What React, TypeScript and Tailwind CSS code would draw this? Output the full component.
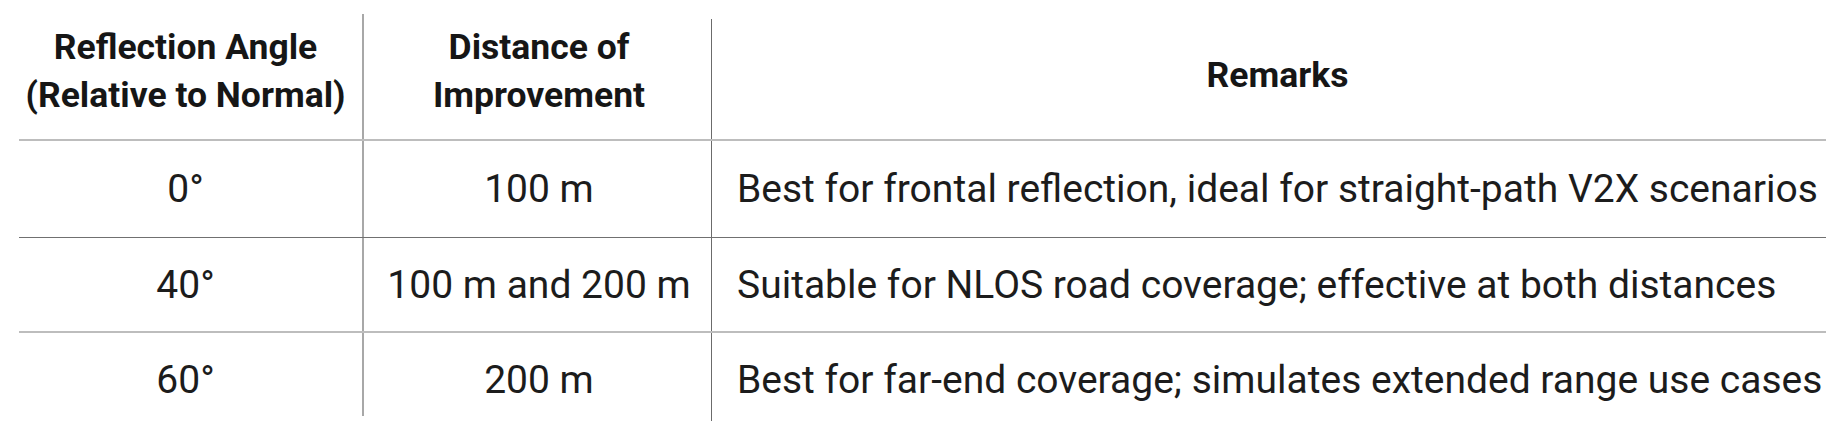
import React from "react";

const rows = [
  { a: "0°", d: "100 m", r: "Best for frontal reflection, ideal for straight-path V2X scenarios" },
  { a: "40°", d: "100 m and 200 m", r: "Suitable for NLOS road coverage; effective at both distances" },
  { a: "60°", d: "200 m", r: "Best for far-end coverage; simulates extended range use cases" },
];

function H({ children }: { children: React.ReactNode }) {
  return (
    <span className="block text-[35.5px] font-bold leading-[48px] text-[#161616] whitespace-nowrap">
      {children}
    </span>
  );
}

function T({ children }: { children: React.ReactNode }) {
  return (
    <span className="block text-[39px] font-normal leading-[48px] text-[#1c1c1c] whitespace-nowrap">
      {children}
    </span>
  );
}

export default function App() {
  return (
    <div className="w-[1836px] h-[426px] bg-white overflow-hidden font-['Roboto','Liberation_Sans',sans-serif]">
      <div className="ml-[19px] w-[1807px]">
        {/* header */}
        <div className="flex items-start h-[141px] border-b-2 border-[#bdbdbd]">
          <div className="mt-[14px] h-[125px] w-[345px] border-r-2 border-[#a8a8a8] pl-[7px] pr-[17px] pb-[12px] flex flex-col items-center justify-center text-center">
            <H>Reflection Angle</H>
            <H>(Relative to Normal)</H>
          </div>
          <div className="mt-[19px] h-[120px] w-[348px] border-r border-[#6b6b6b] pl-[25px] pr-[22px] pb-[17px] flex flex-col items-center justify-center text-center">
            <H>Distance of</H>
            <H>Improvement</H>
          </div>
          <div className="h-[139px] w-[1114px] pl-[27px] pr-[10px] pt-[11px] flex items-center justify-center">
            <H>Remarks</H>
          </div>
        </div>
        {rows.map((row, i) => {
          const last = i === rows.length - 1;
          const rowCls =
            i === 0
              ? "flex items-start h-[97px] border-b border-[#707070]"
              : i === 1
              ? "flex items-start h-[95px] border-b-2 border-[#bdbdbd]"
              : "flex items-start h-[93px]";
          const h1 = i === 0 ? "h-[96px]" : i === 1 ? "h-[93px]" : "h-[83px]";
          const h2 = i === 0 ? "h-[96px]" : i === 1 ? "h-[93px]" : "h-[88px]";
          const h3 = i === 0 ? "h-[96px]" : i === 1 ? "h-[93px]" : "h-[93px]";
          return (
            <div key={i} className={rowCls}>
              <div className={`${h1} w-[345px] border-r-2 border-[#a8a8a8] pl-[7px] pr-[17px] flex items-center justify-center`}>
                <div className={last ? "mt-[10px]" : ""}>
                  <T>{row.a}</T>
                </div>
              </div>
              <div className={`${h2} w-[348px] border-r border-[#6b6b6b] pl-[25px] pr-[22px] flex items-center justify-center`}>
                <div className={last ? "mt-[5px]" : ""}>
                  <T>{row.d}</T>
                </div>
              </div>
              <div className={`${h3} w-[1114px] pl-[25px] pr-[8px] flex items-center`}>
                <T>{row.r}</T>
              </div>
            </div>
          );
        })}
      </div>
    </div>
  );
}
